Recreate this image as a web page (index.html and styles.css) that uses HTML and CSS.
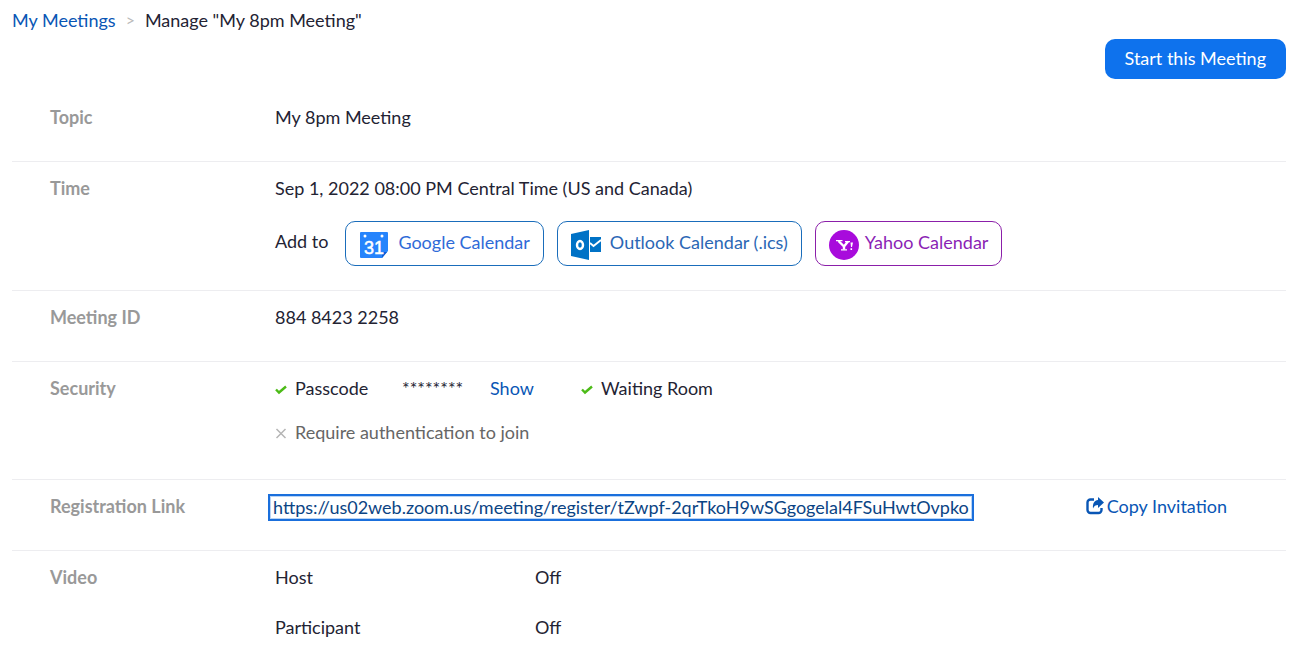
FILE: index.html
```html
<!DOCTYPE html>
<html lang="en">
<head>
<meta charset="UTF-8">
<meta name="viewport" content="width=device-width, initial-scale=1.0">
<title>Manage "My 8pm Meeting"</title>
<link rel="stylesheet" href="styles.css">
</head>
<body>

<nav class="breadcrumb">
  <a href="#">My Meetings</a>
  <span class="separator">&gt;</span>
  <span>Manage "My 8pm Meeting"</span>
</nav>

<div class="toolbar">
  <button type="button" class="btn-start">Start this Meeting</button>
</div>

<main class="meeting-detail">
  <section class="row">
    <div class="label">Topic</div>
    <div class="value">My 8pm Meeting</div>
  </section>

  <section class="row row-time">
    <div class="label">Time</div>
    <div class="value">
      <div>Sep 1, 2022 08:00 PM Central Time (US and Canada)</div>
      <div class="calendars">
        <span class="add-to">Add to</span>
        <a href="#" class="calendar google">
          <svg width="30" height="30" viewBox="0 0 30 30" aria-hidden="true">
            <path fill="#2684fc" d="M2 2h26a1 1 0 0 1 1 1v18l-6 7H2a1 1 0 0 1-1-1V3a1 1 0 0 1 1-1z"/>
            <path fill="#0b5cd5" d="M23 28v-6h5z"/>
            <circle cx="6" cy="6" r="1.5" fill="#fff"/>
            <circle cx="23" cy="6" r="1.5" fill="#fff"/>
            <text x="15" y="24" class="day" text-anchor="middle">31</text>
          </svg>
          <span>Google Calendar</span>
        </a>
        <a href="#" class="calendar outlook">
          <svg width="30" height="30" viewBox="0 0 30 30" aria-hidden="true">
            <path fill="#0072c6" d="M0 4l18-4v30L0 26zM19 7h11v15H19z"/>
            <path fill="none" stroke="#fff" stroke-width="1.800" d="M19 13l3.500 3L30 10"/>
            <ellipse cx="9" cy="15" rx="3" ry="4" fill="none" stroke="#fff" stroke-width="2.400"/>
          </svg>
          <span>Outlook Calendar (.ics)</span>
        </a>
        <a href="#" class="calendar yahoo">
          <svg width="30" height="30" viewBox="0 0 30 30" aria-hidden="true">
            <circle cx="15" cy="15" r="15" fill="#a80bdc"/>
            <path fill="none" stroke="#fff" stroke-width="2.400" d="M9.500 11l5.500 5.500M19 11.500l-4 5v3"/>
            <path fill="none" stroke="#fff" stroke-width="1.300" d="M7 10.700h6.500M16 11.700h5M12 19.800h6"/>
            <path fill="#fff" d="M21.500 12.500h2.500l-1 4.500h-1zM21.500 18.300h1.600v1.700h-1.600z"/>
          </svg>
          <span>Yahoo Calendar</span>
        </a>
      </div>
    </div>
  </section>

  <section class="row">
    <div class="label">Meeting ID</div>
    <div class="value">884 8423 2258</div>
  </section>

  <section class="row row-security">
    <div class="label">Security</div>
    <div class="value security">
      <div class="options">
        <span class="option passcode">
          <svg width="12" height="12" viewBox="0 0 12 12" aria-hidden="true"><path class="check" d="M1 6.500l3 3 7-6"/></svg>
          Passcode
        </span>
        <span class="stars">********</span>
        <a href="#" class="show">Show</a>
        <span class="option">
          <svg width="12" height="12" viewBox="0 0 12 12" aria-hidden="true"><path class="check" d="M1 6.500l3 3 7-6"/></svg>
          Waiting Room
        </span>
      </div>
      <div class="option off">
        <svg width="12" height="12" viewBox="0 0 12 12" aria-hidden="true"><path class="cross" d="M1.500 2l9 9M10.500 2l-9 9"/></svg>
        Require authentication to join
      </div>
    </div>
  </section>

  <section class="row">
    <div class="label">Registration Link</div>
    <div class="value registration">
      <a href="#" class="register-link">https://us02web.zoom.us/meeting/register/tZwpf-2qrTkoH9wSGgogelal4FSuHwtOvpko</a>
      <a href="#" class="copy">
        <svg width="18" height="18" viewBox="0 0 18 18" aria-hidden="true">
          <path fill="none" stroke="#0956b5" stroke-width="2.400" d="M8 2.500H4.500a3 3 0 0 0-3 3V13a3 3 0 0 0 3 3h8a3 3 0 0 0 3-3v-2"/>
          <path fill="#0956b5" d="M12 0l6 5.500-6 5.500V8c-2.500 0-4 1-5 3.500C6.500 6 8.500 3.500 12 3z"/>
        </svg>
        Copy Invitation
      </a>
    </div>
  </section>

  <section class="row row-video">
    <div class="label">Video</div>
    <dl class="value video">
      <dt>Host</dt><dd>Off</dd>
      <dt>Participant</dt><dd>Off</dd>
    </dl>
  </section>
</main>

</body>
</html>
```
FILE: styles.css
```css
body {
  margin: 0;
  padding: 8px 21px 0 12px;
  background: #fff;
  color: #232333;
  font-family: Lato, "Open Sans", sans-serif;
  font-size: 18px;
  line-height: 24px;
}

a {
  color: #0956b5;
  text-decoration: none;
}

svg {
  flex: none;
}

.breadcrumb {
  display: flex;
  gap: 10px;
}

.separator {
  color: #bababa;
  font-size: 16px;
}

.toolbar {
  display: flex;
  justify-content: flex-end;
  padding-top: 7px;
}

.btn-start {
  height: 40px;
  padding: 0 20px 2px;
  border: 0;
  border-radius: 10px;
  background: #0e72ed;
  color: #fff;
  font: inherit;
}

.meeting-detail {
  padding-top: 12px;
}

.row {
  display: flex;
  padding: 14px 0 32px;
  border-bottom: 1px solid #ededf0;
}

.label {
  flex: none;
  width: 225px;
  padding-left: 38px;
  color: #999;
  font-weight: bold;
}

.value {
  flex: 1;
}

/* calendar buttons */
.row-time {
  padding-bottom: 24px;
}

.calendars {
  display: flex;
  flex-wrap: wrap;
  gap: 13px;
  padding-top: 21px;
}

.add-to {
  padding-right: 4px;
  line-height: 40px;
}

.calendar {
  display: flex;
  align-items: center;
  gap: 9px;
  height: 40px;
  padding: 0 13px 3px;
  border: 1px solid #1a6dbb;
  border-radius: 10px;
}

.calendar svg {
  margin-top: 5px;
}

.google {
  color: #2f6bd8;
}

.outlook {
  color: #2b67b5;
}

.yahoo {
  gap: 6px;
  border-color: #8b1fa9;
  color: #8b1fb5;
}

.day {
  fill: #fff;
  stroke: #fff;
  stroke-width: 0.5;
  font: 18px "Liberation Sans", Arial, sans-serif;
}

/* security */
.row-security {
  padding-bottom: 35px;
}

.security {
  display: flex;
  flex-direction: column;
  gap: 20px;
}

.options {
  display: flex;
}

.option {
  display: flex;
  align-items: center;
  gap: 8px;
}

.option svg {
  margin-top: 2px;
}

.passcode {
  width: 127px;
}

.stars {
  width: 88px;
}

.show {
  width: 91px;
}

.off {
  color: #666;
}

.check {
  fill: none;
  stroke: #4cbb17;
  stroke-width: 2.4;
}

.cross {
  fill: none;
  stroke: #b5b5b5;
  stroke-width: 1.5;
}

/* registration */
.registration {
  display: flex;
  justify-content: space-between;
  align-items: flex-start;
}

.register-link {
  margin: 0 0 -3px -7px;
  padding: 0 3px;
  border: 2px solid #1a6fdc;
  box-shadow: inset 0 0 0 1px #b9d4f5;
  color: #0b4484;
  line-height: 23px;
}

.copy {
  display: flex;
  align-items: center;
  gap: 3px;
  padding-right: 59px;
}

.row-video {
  padding-bottom: 0;
  border-bottom: 0;
}

.video {
  display: grid;
  grid-template-columns: 260px 1fr;
  row-gap: 26px;
  margin: 0;
}

.video dd {
  margin: 0;
}
```
